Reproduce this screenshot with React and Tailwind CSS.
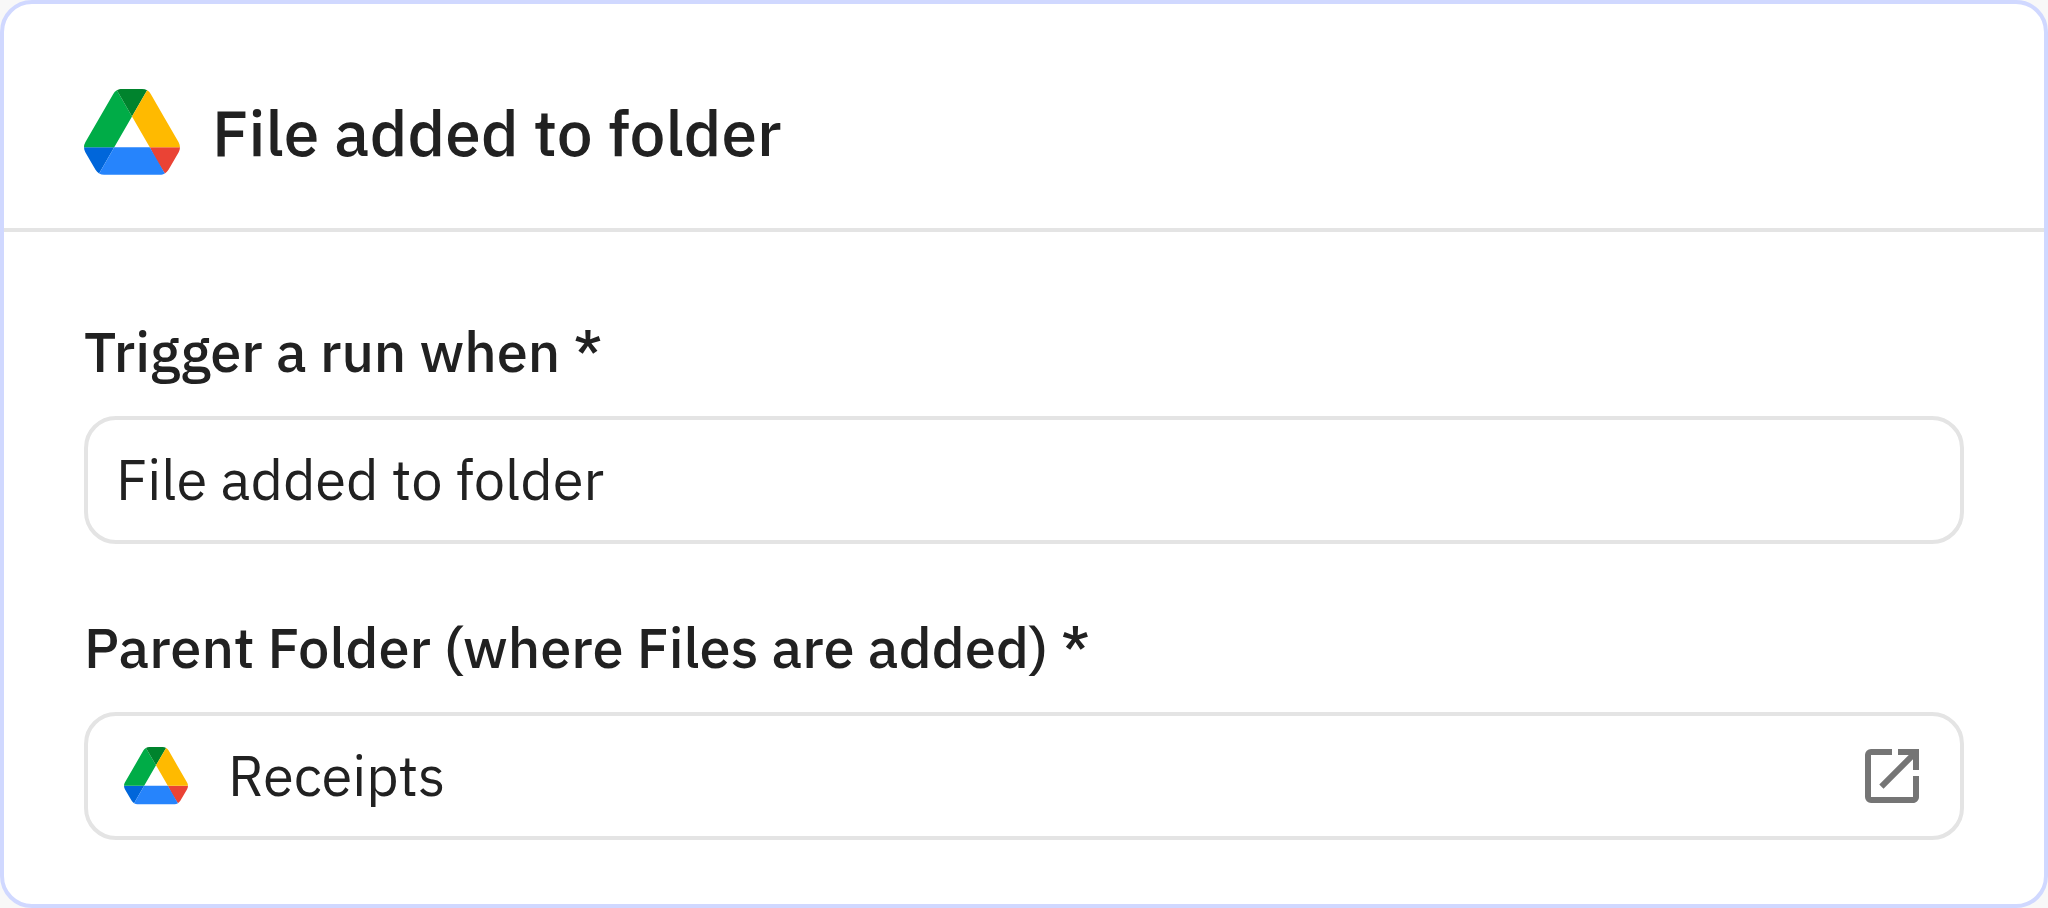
function DriveLogo({ className }) {
  return (
    <svg viewBox="0 0 87.3 78" className={className} aria-hidden="true">
      <path fill="#0066da" d="m6.6 66.85 3.85 6.65c.8 1.4 1.95 2.5 3.3 3.3l13.75-23.8h-27.5c0 1.55.4 3.1 1.2 4.5z" />
      <path fill="#00ac47" d="m43.65 25-13.75-23.8c-1.35.8-2.5 1.9-3.3 3.3l-25.4 44a9.06 9.06 0 0 0 -1.2 4.5h27.5z" />
      <path fill="#ea4335" d="m73.55 76.8c1.35-.8 2.5-1.9 3.3-3.3l1.6-2.75 7.65-13.25c.8-1.4 1.2-2.95 1.2-4.5h-27.502l5.852 11.5z" />
      <path fill="#00832d" d="m43.65 25 13.75-23.8c-1.35-.8-2.9-1.2-4.5-1.2h-18.5c-1.6 0-3.15.45-4.5 1.2z" />
      <path fill="#2684fc" d="m59.8 53h-32.3l-13.75 23.8c1.35.8 2.9 1.2 4.5 1.2h50.8c1.6 0 3.15-.45 4.5-1.2z" />
      <path fill="#ffba00" d="m73.4 26.5-12.7-22c-.8-1.4-1.95-2.5-3.3-3.3l-13.75 23.8 16.15 28h27.45c0-1.55-.4-3.1-1.2-4.5z" />
    </svg>
  );
}

function OpenIcon() {
  return (
    <svg viewBox="0 0 24 24" className="size-[72px]" fill="currentColor" aria-hidden="true">
      <path d="M19 19H5V5h7V3H5a2 2 0 0 0-2 2v14a2 2 0 0 0 2 2h14c1.1 0 2-.9 2-2v-7h-2v7zM14 3v2h3.59l-9.83 9.83 1.41 1.41L19 6.41V10h2V3h-7z" />
    </svg>
  );
}

function Field({ id, label, value, icon, action }) {
  return (
    <div className="flex flex-col gap-[26px]">
      <label htmlFor={id} className="text-[56px] leading-[78px] font-medium">
        {label}
      </label>
      <div className="flex h-32 items-center rounded-4xl border-4 border-[#e4e4e4] bg-white px-7">
        {icon}
        <input
          id={id}
          type="text"
          defaultValue={value}
          className="h-full min-w-0 flex-1 bg-transparent pb-0.5 text-[56px] font-normal outline-none"
        />
        {action}
      </div>
    </div>
  );
}

export default function App() {
  return (
    <main className="min-h-screen bg-[#f8f8f8] font-['IBM_Plex_Sans',Roboto,sans-serif] text-[#212121]">
      <section className="rounded-4xl border-4 border-[#d0d8ff] bg-white">
        <header className="flex items-center gap-8 border-b-4 border-[#e4e4e4] px-20 pt-20 pb-12">
          <DriveLogo className="w-24 shrink-0" />
          <h1 className="text-[64px] leading-[96px] font-medium">File added to folder</h1>
        </header>
        <div className="flex flex-col gap-16 px-20 pt-20 pb-16">
          <Field id="trigger" label="Trigger a run when *" value="File added to folder" />
          <Field
            id="folder"
            label="Parent Folder (where Files are added) *"
            value="Receipts"
            icon={<DriveLogo className="mr-10 ml-2 w-16 shrink-0" />}
            action={
              <button type="button" aria-label="Open folder" className="mr-1 shrink-0 text-[#757575]">
                <OpenIcon />
              </button>
            }
          />
        </div>
      </section>
    </main>
  );
}
